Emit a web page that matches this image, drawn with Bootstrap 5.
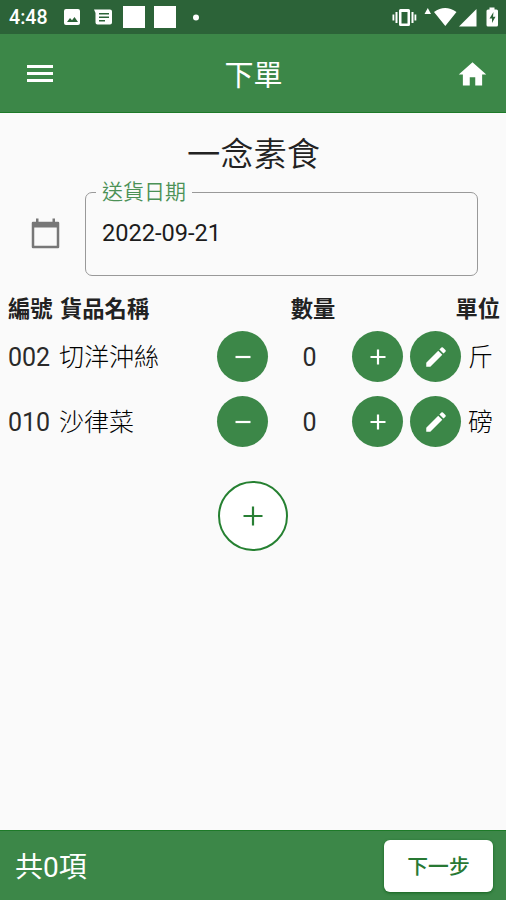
<!DOCTYPE html>
<html lang="zh-Hant">
<head>
<meta charset="utf-8">
<meta name="viewport" content="width=device-width, initial-scale=1">
<title>下單</title>
<link href="https://cdn.jsdelivr.net/npm/bootstrap@5.3.0/dist/css/bootstrap.min.css" rel="stylesheet">
<style>
  :root { --brand: #3c8748; --brand-line: #1d7a28; }
  body { font-family: Roboto, "Noto Sans CJK TC", sans-serif; background: #fafafa; color: #1c1c1c; height: 900px; overflow: hidden; line-height: 1; }
  svg { display: block; flex: none; }
  .status { height: 34px; background: #2c6338; font-size: 19.6px; font-weight: 500; padding-left: 9px; padding-right: 6px; }
  .status span { padding-top: 2px; }
  .status-left { margin-left: -1px; }
  .appbar { height: 79px; background: var(--brand); border-bottom: 1px solid var(--brand-line); padding: 2px 17px 0 26px; }
  .appbar-title { font-size: 29px; line-height: 40px; padding: 4px 3px 0 0; }
  .shop { font-size: 33.3px; line-height: 40px; margin-top: 22px; font-weight: 350; color: #222; padding-left: 1px; }
  .date-row { padding: 4px 28px 0 30px; gap: 24px; }
  .date-row svg { margin-top: 37px; }
  .date-box { min-width: 0; margin: 0; border: 1px solid #999; border-radius: 7px; height: 97px; padding: 0 16px; }
  .date-box legend { float: none; width: auto; margin: 0 0 0 -6px; padding: 0 6px; font-size: 21px; line-height: 26px; color: #4b9156; font-weight: 350; }
  .date-value { font-size: 23.6px; line-height: 30px; margin-top: 13px; }
  .order { display: grid; grid-template-columns: 51px 158px 50px 85px 50px 8px 50px 1fr; padding: 0 6px 0 8px; align-items: center; }
  .heads { height: 30px; margin-top: 18px; font-size: 22.3px; line-height: 30px; font-weight: 700; color: #222; }
  .heads > :nth-child(2) { padding-left: 1px; }
  .qty-head { padding-left: 7px; white-space: nowrap; }
  .unit-head { grid-column: 7 / 9; }
  .item { height: 65px; font-size: 25px; font-weight: 300; color: #000; line-height: 30px; }
  .item > div { padding-top: 2px; }
  .item .num { font-weight: 400; color: #2a2a2a; }
  .round-btn { width: 51px; height: 51px; border: 0; background: var(--brand); }
  .unit { padding-left: 8px; }
  .add-btn { width: 70px; height: 70px; border: 2px solid #258031; background: #fff; margin-top: 27px; }
  .footbar { height: 70px; background: var(--brand); border-top: 1px solid var(--brand-line); padding: 0 13px 0 15px; }
  .total { font-size: 28px; line-height: 40px; padding-top: 4px; }
  .next-btn { width: 109px; height: 52px; border-radius: 6px; font-size: 20.8px; font-weight: 500; color: #287833; line-height: 30px; box-shadow: 0 1px 3px #16631f; }
  .next-btn span { display: block; padding-top: 2px; }
</style>
<script src="https://cdn.jsdelivr.net/npm/bootstrap@5.3.0/dist/js/bootstrap.bundle.min.js"></script>
</head>
<body class="d-flex flex-column">
  <div class="status d-flex align-items-center text-white">
    <span>4:48</span>
    <svg class="status-left" width="170" height="34" viewBox="48 0 170 34" fill="#fff">
      <path fill-rule="evenodd" d="M67 9h12q2 0 2 2v12q0 2-2 2H67q-2 0-2-2V11q0-2 2-2zM68 22h11l-3.500-5-2.500 3.200-2-2.200z"/>
      <path fill-rule="evenodd" d="M95 9.500h16q2 0 2 2v11q0 2-2 2H98.500q-2 0-2-2V13zM100 13v1.500h10V13zM100 16.500V18h10v-1.500zM100 20v1.500h6V20z"/>
      <path d="M124 6h22v22h-22zM155 6h22v22h-22z"/><circle cx="197" cy="17.500" r="3"/>
    </svg>
    <svg class="ms-auto" width="110" height="34" viewBox="390 0 110 34" fill="#fff">
      <path fill-rule="evenodd" d="M400.500 9h8q1.500 0 1.500 1.500v14q0 1.500-1.500 1.500h-8q-1.500 0-1.500-1.500v-14Q399 9 400.500 9zM401.500 12v11.500h6V12z"/>
      <path d="M395.500 12h2v11h-2zM392.500 14.500h1.800v6h-1.800zM411.500 12h2v11h-2zM414.500 14.500h1.800v6h-1.800zM424.500 14l3.300-6 3.200 6zM434 12q11-8 22.500 0L445.300 26zM459 26.500L476.500 9v17.500z"/>
      <path fill-rule="evenodd" d="M489.500 7.500h5v2h2q1.500 0 1.500 1.500v14q0 1.500-1.500 1.500h-8.500q-1.500 0-1.500-1.500V11q0-1.500 1.500-1.500h1.500zM493.500 12l-4 6.500h2.500v4.500l3.500-6.200H493z"/>
    </svg>
  </div>
  <header class="appbar d-flex align-items-center justify-content-between text-white">
    <svg width="28" height="20" viewBox="0 0 28 20" fill="#fff"><path d="M1 1h26v3H1zM1 8h26v3H1zM1 15h26v3H1z"/></svg>
    <div class="appbar-title">下單</div>
    <svg width="33" height="33" viewBox="0 0 24 24" fill="#fff"><path d="M10 20v-6h4v6h5v-8h3L12 3 2 12h3v8z"/></svg>
  </header>
  <main class="flex-grow-1">
    <div class="shop text-center">一念素食</div>
    <div class="date-row d-flex align-items-start">
      <svg width="31" height="34" viewBox="0 0 31 34"><path fill="none" stroke="#777" stroke-width="2.500" stroke-linejoin="round" d="M3 7h25v24H3z"/><path fill="#777" d="M2 6h27v5.500H2zM6 2.500h2.500v5H6zM22.500 2.500H25v5h-2.500z"/></svg>
      <fieldset class="date-box flex-grow-1">
        <legend>送貨日期</legend>
        <div class="date-value">2022-09-21</div>
      </fieldset>
    </div>
    <div class="order heads">
      <div>編號</div><div>貨品名稱</div><div></div><div class="qty-head text-center">數量</div><div></div><div></div><div class="unit-head text-end">單位</div>
    </div>
    <div>
      <div class="order item">
        <div class="num">002</div><div>切洋沖絲</div>
        <button class="round-btn rounded-circle p-0 d-flex align-items-center justify-content-center" aria-label="減少"><svg width="18" height="18" viewBox="0 0 18 18"><path stroke="#fff" stroke-width="2.200" d="M1.500 9h15"/></svg></button>
        <div class="num text-center">0</div>
        <button class="round-btn rounded-circle p-0 d-flex align-items-center justify-content-center" aria-label="增加"><svg width="18" height="18" viewBox="0 0 18 18"><path stroke="#fff" stroke-width="2.200" d="M1.500 9h15M9 1.500v15"/></svg></button>
        <div></div>
        <button class="round-btn rounded-circle p-0 d-flex align-items-center justify-content-center" aria-label="編輯"><svg width="26" height="26" viewBox="0 0 24 24" fill="#fff"><path d="M3 17.250V21h3.750L17.810 9.940l-3.750-3.750zM20.710 7.040a1 1 0 0 0 0-1.410l-2.340-2.340a1 1 0 0 0-1.410 0l-1.830 1.830 3.750 3.750z"/></svg></button>
        <div class="unit">斤</div>
      </div>
      <div class="order item">
        <div class="num">010</div><div>沙律菜</div>
        <button class="round-btn rounded-circle p-0 d-flex align-items-center justify-content-center" aria-label="減少"><svg width="18" height="18" viewBox="0 0 18 18"><path stroke="#fff" stroke-width="2.200" d="M1.500 9h15"/></svg></button>
        <div class="num text-center">0</div>
        <button class="round-btn rounded-circle p-0 d-flex align-items-center justify-content-center" aria-label="增加"><svg width="18" height="18" viewBox="0 0 18 18"><path stroke="#fff" stroke-width="2.200" d="M1.500 9h15M9 1.500v15"/></svg></button>
        <div></div>
        <button class="round-btn rounded-circle p-0 d-flex align-items-center justify-content-center" aria-label="編輯"><svg width="26" height="26" viewBox="0 0 24 24" fill="#fff"><path d="M3 17.250V21h3.750L17.810 9.940l-3.750-3.750zM20.710 7.040a1 1 0 0 0 0-1.410l-2.340-2.340a1 1 0 0 0-1.410 0l-1.830 1.830 3.750 3.750z"/></svg></button>
        <div class="unit">磅</div>
      </div>
    </div>
    <button class="add-btn rounded-circle p-0 d-flex align-items-center justify-content-center mx-auto" aria-label="新增貨品"><svg width="22" height="22" viewBox="0 0 22 22"><path stroke="#287f34" stroke-width="2.200" d="M1.500 11h19M11 1.500v19"/></svg></button>
  </main>
  <footer class="footbar d-flex align-items-center justify-content-between text-white">
    <div class="total">共0項</div>
    <button class="next-btn btn btn-light bg-white border-0 p-0"><span>下一步</span></button>
  </footer>
</body>
</html>
